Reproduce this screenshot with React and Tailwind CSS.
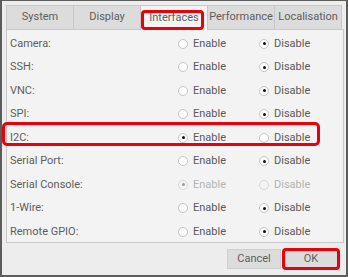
import React from 'react';

const tabs = ['System', 'Display', 'Interfaces', 'Performance', 'Localisation'];

const rows = [
  { label: 'Camera:', on: false },
  { label: 'SSH:', on: false },
  { label: 'VNC:', on: false },
  { label: 'SPI:', on: false },
  { label: 'I2C:', on: true, mark: true },
  { label: 'Serial Port:', on: false },
  { label: 'Serial Console:', on: true, disabled: true },
  { label: '1-Wire:', on: false },
  { label: 'Remote GPIO:', on: false },
];

const Radio = ({ checked, disabled, text }) => (
  <div className={`flex items-center gap-[5px] ${disabled ? 'text-[#b4b4b4]' : 'text-[#5a5a5a]'}`}>
    <span className={`w-[10px] h-[10px] rounded-full border flex items-center justify-center ${disabled ? 'border-[#d8d8d8] bg-[#f4f4f4]' : 'border-[#c4c4c4] bg-white'}`}>
      {checked && <span className={`w-[3px] h-[3px] rounded-full ${disabled ? 'bg-[#9a9a9a]' : 'bg-[#111]'}`}></span>}
    </span>
    <span>{text}</span>
  </div>
);

const App = () => {
  return (
    <div
      className="w-[348px] h-[277px] bg-[#ededed] border-x-2 border-b-2 border-t border-[#5c5c5c] text-[11px] relative"
      style={{ fontFamily: 'Roboto, "Liberation Sans", sans-serif' }}
    >
      {/* Tabs */}
      <div className="flex ml-[4px] mt-[4px] h-[25px]">
        {tabs.map((t) => {
          const active = t === 'Interfaces';
          return (
            <div
              key={t}
              className={`relative w-[68px] flex items-center justify-center border border-[#c8c8c8] -ml-px first:ml-0 text-[#5e5e5e] ${active ? 'bg-[#f3f3f3] border-b-0' : 'bg-[#dcdcdc]'}`}
            >
              {t}
              {active && (
                <div className="absolute left-[0px] top-[4px] w-[63px] h-[20px] border-[3px] border-[#e8000b] rounded-[4px]"></div>
              )}
            </div>
          );
        })}
      </div>

      {/* Panel */}
      <div className="ml-[4px] w-[338px] h-[214px] border border-[#c8c8c8] bg-[#f3f3f3] pt-[2px] -mt-px">
        {rows.map((r) => (
          <div key={r.label} className="relative flex items-center h-[23.5px] text-[#5e5e5e]">
            <div className="w-[171px] pl-[3px]">{r.label}</div>
            <div className="w-[81px]">
              <Radio checked={r.on} disabled={r.disabled} text="Enable" />
            </div>
            <Radio checked={!r.on} disabled={r.disabled} text="Disable" />
            {r.mark && (
              <div className="absolute left-[-5px] top-[-4px] w-[318px] h-[24px] border-[3px] border-[#e8000b] rounded-[5px]"></div>
            )}
          </div>
        ))}
      </div>

      {/* Buttons */}
      <div className="flex justify-end gap-[2px] mr-[7px] mt-[6px]">
        <div className="w-[54px] h-[20px] bg-[#dcdcdc] border border-[#cfcfcf] flex items-center justify-center text-[#5e5e5e]">Cancel</div>
        <div className="relative w-[56px] h-[20px] bg-[#dcdcdc] border border-[#cfcfcf] flex items-center justify-center text-[#5e5e5e]">
          OK
          <div className="absolute -left-[2px] -top-[2px] -right-[2px] -bottom-[2px] border-[3px] border-[#e8000b] rounded-[4px]"></div>
        </div>
      </div>
    </div>
  );
};

export default App;
